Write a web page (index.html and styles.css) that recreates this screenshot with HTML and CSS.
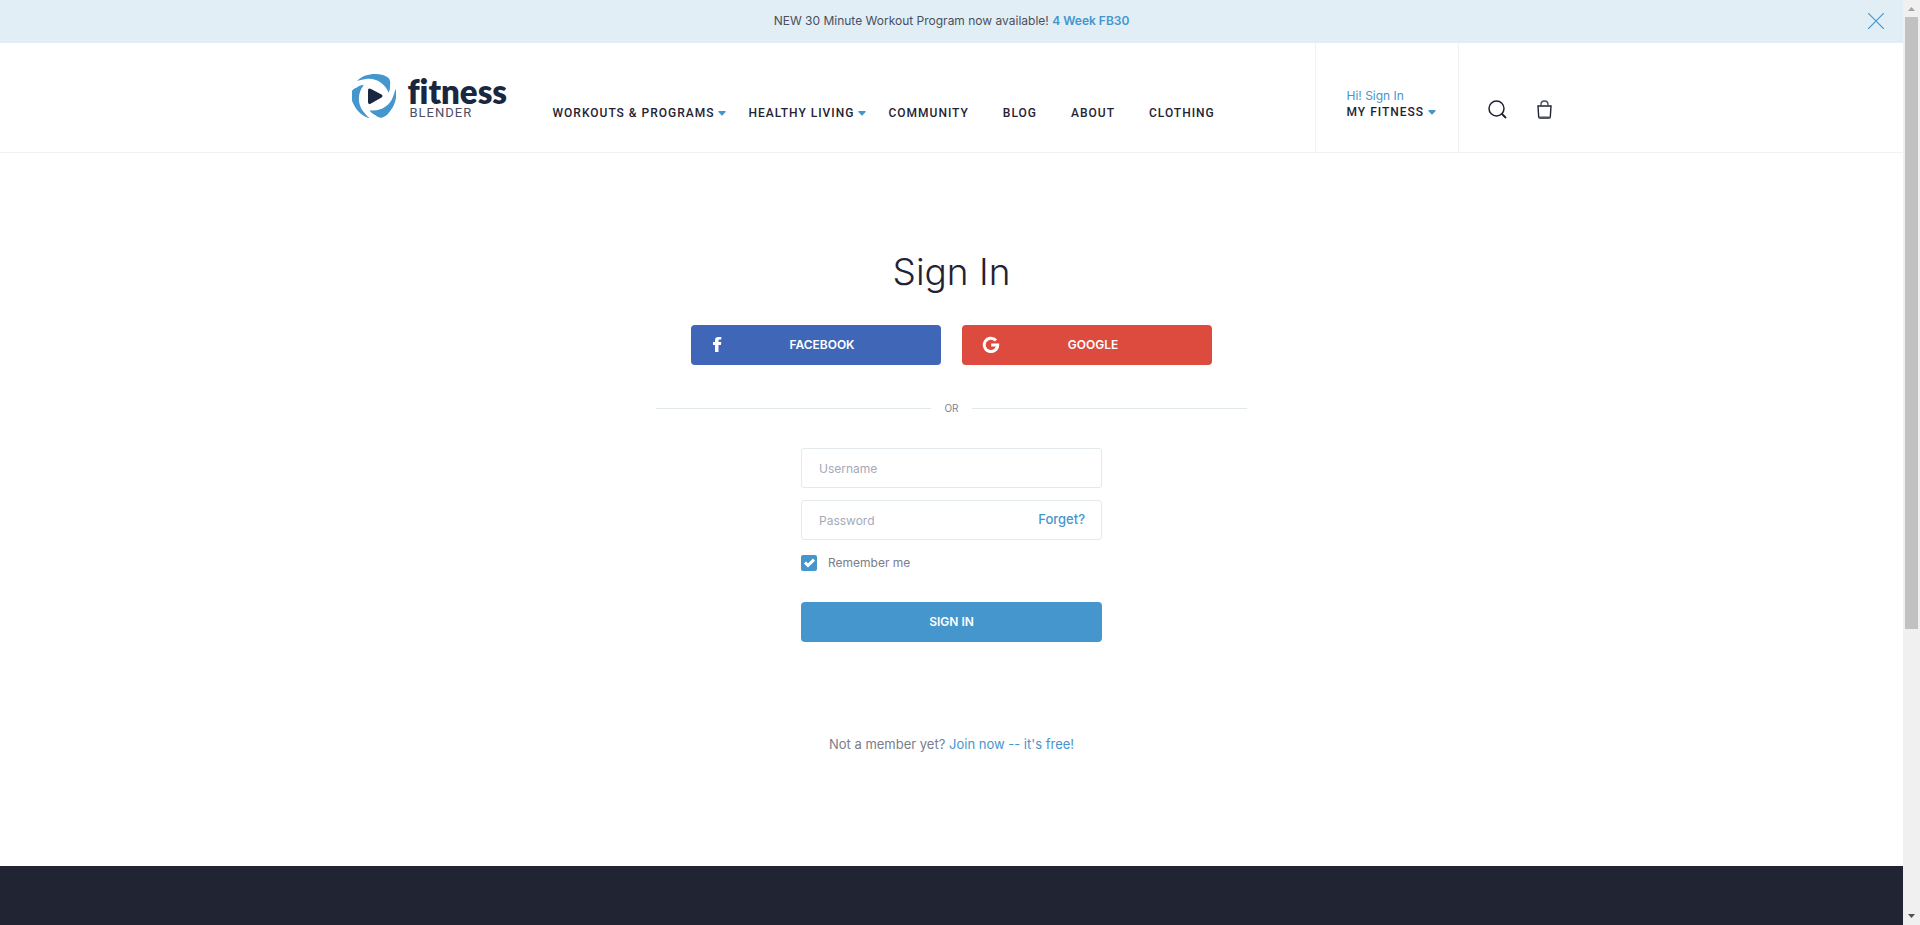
FILE: index.html
```html
<!DOCTYPE html>
<html lang="en">
<head>
<meta charset="utf-8">
<title>Sign In | Fitness Blender</title>
<link rel="stylesheet" href="styles.css">
</head>
<body>
<div class="site">
  <aside class="banner">
    <p class="banner-text">NEW 30 Minute Workout Program now available! <a class="banner-link" href="#">4 Week FB30</a></p>
    <button class="banner-close" type="button" aria-label="Close">
      <svg width="16" height="16" viewBox="0 0 16 16" fill="none" stroke="#4496cd" stroke-width="1.2"><path d="M0 0L16 16M16 0L0 16"/></svg>
    </button>
  </aside>
  <header class="header">
    <div class="header-inner">
      <a class="logo" href="#">
        <svg class="logo-mark" width="44" height="44" viewBox="0 0 44 44" aria-hidden="true">
          <g fill="#4496cd">
            <path d="M5 7C12 0 22-1 31 1C37 3 39 6 38 11C38 14 38 17 36.500 18.500C33 9 23 3.500 14 5C10 5.500 7 6.500 5 7Z"/>
            <path d="M5 7C12 0 22-1 31 1C37 3 39 6 38 11C38 14 38 17 36.500 18.500C33 9 23 3.500 14 5C10 5.500 7 6.500 5 7Z" transform="rotate(120 22 22)"/>
            <path d="M5 7C12 0 22-1 31 1C37 3 39 6 38 11C38 14 38 17 36.500 18.500C33 9 23 3.500 14 5C10 5.500 7 6.500 5 7Z" transform="rotate(240 22 22)"/>
          </g>
          <path fill="#1a2740" d="M16 16.500Q16 13.500 19 15L29.500 20.500Q31.500 22 29.500 23.500L19 29.500Q16 31 16 28Z"/>
        </svg>
        <span class="logo-words"><span class="logo-top">fitness</span><span class="logo-sub">BLENDER</span></span>
      </a>
      <nav class="nav">
        <a class="nav-link has-menu" href="#">WORKOUTS &amp; PROGRAMS<svg class="caret" width="8" height="5" viewBox="0 0 8 5"><path d="M1 0H7Q8 0 7.600 1L4.800 4Q4 5 3.200 4L.4 1Q0 0 1 0Z"/></svg></a>
        <a class="nav-link has-menu" href="#">HEALTHY LIVING<svg class="caret" width="8" height="5" viewBox="0 0 8 5"><path d="M1 0H7Q8 0 7.600 1L4.800 4Q4 5 3.200 4L.4 1Q0 0 1 0Z"/></svg></a>
        <a class="nav-link" href="#">COMMUNITY</a>
        <a class="nav-link" href="#">BLOG</a>
        <a class="nav-link" href="#">ABOUT</a>
        <a class="nav-link" href="#">CLOTHING</a>
      </nav>
      <div class="account">
        <a class="account-hi" href="#">Hi! Sign In</a>
        <a class="account-menu" href="#">MY FITNESS<svg class="caret" width="8" height="5" viewBox="0 0 8 5"><path d="M1 0H7Q8 0 7.600 1L4.800 4Q4 5 3.200 4L.4 1Q0 0 1 0Z"/></svg></a>
      </div>
      <div class="tools">
        <button class="tool" type="button" aria-label="Search">
          <svg width="19" height="19" viewBox="0 0 19 19" fill="none" stroke="#1f2333" stroke-width="1.500"><circle cx="8.500" cy="8.500" r="7.500"/><path d="M13.500 13.500L18 18" stroke-width="2"/></svg>
        </button>
        <button class="tool" type="button" aria-label="Shopping bag">
          <svg width="15" height="19" viewBox="0 0 15 19" fill="none" stroke="#1f2333" stroke-width="1.400"><path d="M1 6H14L13.300 17Q13.200 18 12.200 18H2.800Q1.800 18 1.700 17Z"/><path d="M4 6V4.500Q4 1 7.500 1T11 4.500V6" stroke="#4b4e5c"/><path d="M2.500 17.200H12.500" stroke="#4b4e5c"/></svg>
        </button>
      </div>
    </div>
  </header>
  <main class="main">
    <h1 class="title">Sign In</h1>
    <div class="social">
      <button class="social-btn facebook" type="button">
        <svg class="social-icon" width="18" height="18" viewBox="0 0 18 18" fill="#fff" aria-hidden="true"><path d="M7.500 4.500V6H10.300L9.900 9H7.500V16H4V9H2V6H4V4.200Q4 1 7.500 1H10.300V3.500H8.700Q7.500 3.500 7.500 4.500Z"/></svg>
        <span>FACEBOOK</span>
      </button>
      <button class="social-btn google" type="button">
        <svg class="social-icon" width="18" height="18" viewBox="0 0 18 18" fill="none" stroke="#fff" stroke-width="3" aria-hidden="true"><path d="M14 4.400A6.700 6.700 0 1 0 15.700 9H9.200"/></svg>
        <span>GOOGLE</span>
      </button>
    </div>
    <div class="divider"><span>OR</span></div>
    <form class="form">
      <input class="field" type="text" placeholder="Username" aria-label="Username">
      <div class="password">
        <input class="field" type="password" placeholder="Password" aria-label="Password">
        <a class="forget" href="#">Forget?</a>
      </div>
      <label class="remember"><input class="check" type="checkbox" checked><svg class="tick" width="16" height="16" viewBox="0 0 16 16" aria-hidden="true"><path d="M4 7.500L7 10.500L13 4.700" fill="none" stroke="#fff" stroke-width="3"/></svg><span>Remember me</span></label>
      <button class="submit" type="button">SIGN IN</button>
    </form>
    <p class="join">Not a member yet? <a class="join-link" href="#">Join now -- it's free!</a></p>
  </main>
  <footer class="footer"></footer>
</div>
<div class="scrollbar" aria-hidden="true">
  <svg class="arrow" width="17" height="17" viewBox="0 0 17 17"><path d="M5 11L8.500 7L12 11Z" fill="#a3a3a3"/></svg>
  <div class="track"><div class="thumb"></div></div>
  <svg class="arrow" width="17" height="17" viewBox="0 0 17 17"><path d="M5 6L8.500 10L12 6Z" fill="#505050"/></svg>
</div>
</body>
</html>
```

FILE: styles.css
```css
* { box-sizing: border-box; }
body {
  margin: 0;
  display: flex;
  height: 100vh;
  overflow: hidden;
  background: #fff;
  color: #1f2333;
  font-family: Inter, "Liberation Sans", sans-serif;
  font-size: 13px;
  line-height: 16px;
}
a { color: inherit; text-decoration: none; }
button { font: inherit; border: 0; padding: 0; background: none; cursor: pointer; }
p, h1 { margin: 0; }
svg { display: block; flex: none; }

.site { flex: 1; display: flex; flex-direction: column; }

.banner {
  position: relative;
  display: flex;
  align-items: center;
  justify-content: center;
  height: 43px;
  padding-bottom: 2px;
  background: #e1eef6;
}
.banner-text { font-size: 12px; color: #4b4e5c; }
.banner-link { color: #4496cd; font-weight: 600; }
.banner-close { position: absolute; right: 19px; top: 13px; }

.header { border-bottom: 1px solid #eff3f5; }
.header-inner {
  display: flex;
  width: 1200px;
  max-width: 100%;
  height: 109px;
  margin: 0 auto;
}
.logo { display: flex; gap: 12px; width: 201px; padding-top: 31px; }
.logo-words { display: flex; flex-direction: column; padding-top: 3px; }
.logo-top { font: 800 33px/28px Lato, sans-serif; font-variant-ligatures: none; color: #1a2740; }
.logo-sub { padding-left: 2px; font: 400 13px/16px Roboto, sans-serif; letter-spacing: 1px; color: #4b4e66; }

.nav {
  flex: 1;
  display: flex;
  gap: 34px;
  padding-top: 62px;
  font-family: Roboto, sans-serif;
  font-size: 12px;
  font-weight: 500;
  letter-spacing: 1px;
  white-space: nowrap;
}
.caret { fill: #4496cd; }
.has-menu { display: flex; align-items: center; gap: 4px; height: 16px; margin-right: -12px; }

.account {
  width: 144px;
  padding: 44px 0 0 31px;
  border: solid #eff3f5;
  border-width: 0 1px;
  font-size: 12px;
  line-height: 17px;
}
.account-hi { display: block; color: #4496cd; }
.account-menu {
  display: flex;
  align-items: center;
  gap: 4px;
  font-family: Roboto, sans-serif;
  font-weight: 500;
  letter-spacing: 1px;
  white-space: nowrap;
}
.tools { display: flex; align-items: flex-start; justify-content: space-between; width: 93px; padding: 57px 0 0 29px; }

.main { display: flex; flex-direction: column; align-items: center; height: 713px; padding-top: 93px; }
.title { font-size: 37px; line-height: 52px; font-weight: 300; }
.social { display: flex; gap: 21px; margin-top: 27px; }
.social-btn {
  position: relative;
  width: 250px;
  height: 40px;
  padding-left: 12px;
  border-radius: 4px;
  color: #fff;
  font-weight: 600;
  font-size: 12px;
}
.facebook { background: #4067b7; }
.google { background: #dd4b3e; }
.social-icon { position: absolute; left: 20px; top: 11px; }
.divider {
  display: flex;
  align-items: center;
  gap: 13px;
  width: 591px;
  height: 16px;
  margin-top: 35px;
  font-size: 10px;
  color: #7d8392;
}
.divider::before, .divider::after { content: ""; flex: 1; height: 1px; background: #e1e9ed; }

.form { display: flex; flex-direction: column; width: 301px; margin-top: 32px; }
.field {
  width: 100%;
  height: 40px;
  padding: 0 17px;
  border: 1px solid #e3eaed;
  border-radius: 3px;
  background: #fff;
  font: inherit;
  font-size: 12px;
  color: #1f2333;
}
.field::placeholder { color: #a5a9ba; opacity: 1; }
.password { position: relative; margin-top: 12px; }
.forget { position: absolute; right: 17px; top: 11px; color: #4496cd; font-weight: 500; }
.remember { position: relative; display: flex; align-items: center; gap: 11px; margin-top: 15px; font-size: 12px; color: #7a7d8a; }
.check { appearance: none; width: 16px; height: 16px; margin: 0; border-radius: 2px; background: #4496cd; }
.tick { position: absolute; left: 0; top: 0; pointer-events: none; }
.check:not(:checked) + .tick { display: none; }
.submit { height: 40px; margin-top: 31px; border-radius: 4px; background: #4496cd; color: #fff; font-weight: 600; font-size: 12px; }
.join { margin-top: 93px; line-height: 18px; color: #7a7d8a; }
.join-link { color: #4496cd; }
.footer { flex: 1; background: #212433; }

.scrollbar { display: flex; flex-direction: column; width: 17px; background: #f0f0f0; }
.track { flex: 1; padding: 0 2px; }
.thumb { height: 68.700%; background: #c1c1c1; }
```
